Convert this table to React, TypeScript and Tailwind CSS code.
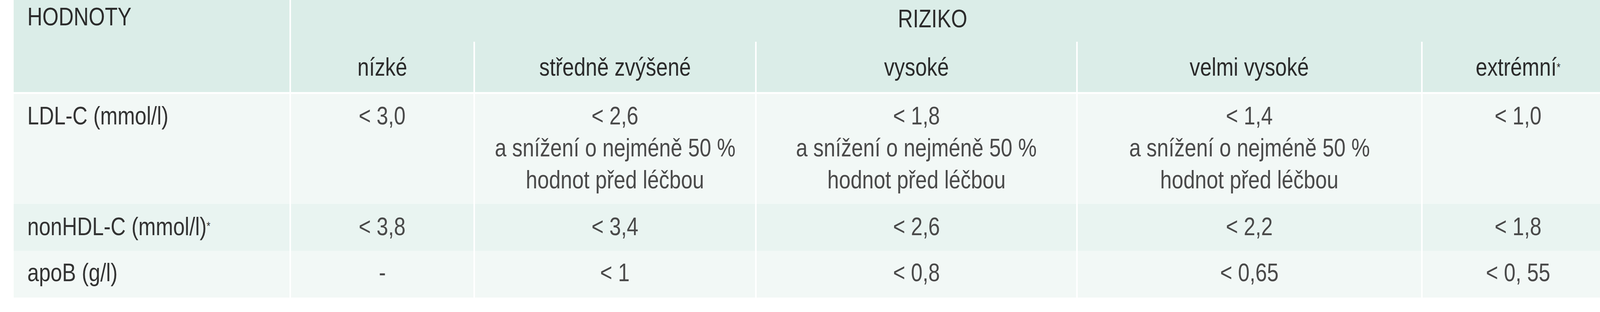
import React from "react";

const FONT = { fontFamily: '"Liberation Sans", Arial, sans-serif' };

const cols = "grid grid-cols-[706px_467px_717px_818px_879px_489px] gap-x-[4px]";

function T({ children, left = false }: { children: React.ReactNode; left?: boolean }) {
  return (
    <span className={"inline-block whitespace-nowrap scale-x-[0.82] " + (left ? "origin-left" : "origin-center")}>
      {children}
    </span>
  );
}

type Row = {
  label: React.ReactNode;
  values: string[][];
  h: string;
  pt: string;
  bg: string;
};

const reduction = ["a snížení o nejméně 50 %", "hodnot před léčbou"];

const rows: Row[] = [
  {
    label: "LDL-C (mmol/l)",
    values: [["< 3,0"], ["< 2,6", ...reduction], ["< 1,8", ...reduction], ["< 1,4", ...reduction], ["< 1,0"]],
    h: "h-[282px]",
    pt: "pt-[15px]",
    bg: "bg-[#f2f8f6]",
  },
  {
    label: (
      <>
        nonHDL-C (mmol/l)
        <span className="relative top-[-14px] text-[30px]">*</span>
      </>
    ),
    values: [["< 3,8"], ["< 3,4"], ["< 2,6"], ["< 2,2"], ["< 1,8"]],
    h: "h-[120px]",
    pt: "pt-[17px]",
    bg: "bg-[#e9f4f1]",
  },
  {
    label: "apoB (g/l)",
    values: [["-"], ["< 1"], ["< 0,8"], ["< 0,65"], ["< 0, 55"]],
    h: "h-[120px]",
    pt: "pt-[15px]",
    bg: "bg-[#f2f8f6]",
  },
];

const subheads: React.ReactNode[] = [
  "nízké",
  "středně zvýšené",
  "vysoké",
  "velmi vysoké",
  (
    <>
      extrémní
      <span className="relative top-[-12px] text-[30px]">*</span>
    </>
  ),
];

export default function App() {
  return (
    <div className="w-[4148px] h-[800px] bg-white text-[65px] leading-[82px]" style={FONT}>
      <div className="ml-[35px] w-[4096px]">
        {/* header */}
        <div className={cols + " border-b-[5px] border-white"}>
          <div className="row-span-2 h-[236px] bg-[#dbede8] pl-[35px] pt-[2px] text-[#2b2b2b]">
            <T left>HODNOTY</T>
          </div>
          <div className="col-span-5 h-[107px] bg-[#dbede8] pt-[7px] pr-[102px] text-center text-[#2b2b2b]">
            <T>RIZIKO</T>
          </div>
          {subheads.map((s, i) => (
            <div key={i} className="h-[129px] bg-[#dbede8] pt-[24px] text-center text-[#2b2b2b]">
              <T>{s}</T>
            </div>
          ))}
        </div>
        {/* body */}
        {rows.map((r, ri) => (
          <div key={ri} className={cols}>
            <div className={`${r.h} ${r.pt} ${r.bg} pl-[35px] text-[#333333]`}>
              <T left>{r.label}</T>
            </div>
            {r.values.map((v, vi) => (
              <div key={vi} className={`${r.h} ${r.pt} ${r.bg} flex flex-col items-center text-[#4a4a4a]`}>
                {v.map((line, li) => (
                  <T key={li}>{line}</T>
                ))}
              </div>
            ))}
          </div>
        ))}
      </div>
    </div>
  );
}
